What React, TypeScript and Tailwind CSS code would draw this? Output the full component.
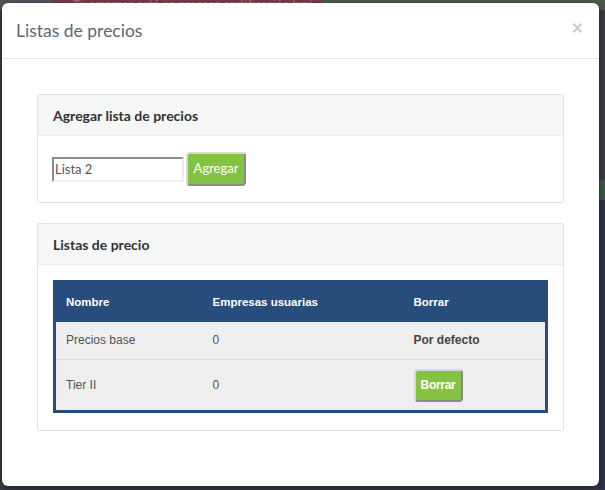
import React from "react";

const rows = [
  { name: "Precios base", count: 0, isDefault: true },
  { name: "Tier II", count: 0, isDefault: false },
];

function GreenButton({ children, className = "" }: { children: React.ReactNode; className?: string }) {
  return (
    <button
      className={
        "bg-[#84c341] text-white rounded-[4px] border-2 border-t-[#d8d8d8] border-l-[#d8d8d8] border-r-[#8a8a8a] border-b-[#8a8a8a] " +
        className
      }
    >
      {children}
    </button>
  );
}

export default function App() {
  return (
    <div className="relative w-[605px] h-[490px] overflow-hidden bg-[#3b3e48] font-['Lato',sans-serif]">
      {/* Backdrop: page behind the overlay */}
      <div className="flex h-[10px] w-full">
        <div className="w-[53px] bg-[#52565c]" />
        <div className="w-[268px] bg-[#7a3a48] text-[#a46c78] text-[12px] leading-[8px] overflow-hidden pl-[20px] font-bold whitespace-nowrap">
          Tu empresa está en proceso certificación bmi
        </div>
        <div className="flex-1 bg-[#4b5a4c]" />
      </div>
      <div className="absolute right-0 top-[180px] w-[8px] h-[20px] bg-[#3e5a4a]" />
      <div className="absolute right-0 top-[200px] w-[8px] h-[290px] bg-[#30344c]" />

      {/* Modal */}
      <div className="absolute left-[2px] top-[3px] w-[597px] h-[483px] bg-white rounded-[6px] shadow-[0_3px_9px_rgba(0,0,0,0.5)] overflow-hidden">
        <div className="flex items-center justify-between h-[56px] border-b border-[#e5e5e5] pl-[14px] pr-[16px]">
          <h4 className="text-[17.5px] text-[#5a6874] pt-[1px]">Listas de precios</h4>
          <span className="text-[#cccccc] text-[20px] font-bold leading-none -mt-[8px]">×</span>
        </div>

        <div className="px-[35px] pt-[35px]">
          {/* Panel 1 */}
          <div className="border border-[#dde4e4] rounded-[2px]">
            <div className="h-[41px] bg-[#f5f7f6] border-b border-[#e8eded] flex items-center px-[15px]">
              <span className="text-[14px] font-bold text-[#333]">Agregar lista de precios</span>
            </div>
            <div className="flex items-center px-[14px] pt-[16px] pb-[16px]">
              <input
                defaultValue="Lista 2"
                className="w-[132px] h-[25px] text-[13px] text-[#555] px-[1px] border-2 border-t-[#8c8c8c] border-l-[#8c8c8c] border-r-[#eeeeee] border-b-[#eeeeee] outline-none"
              />
              <GreenButton className="ml-[2px] h-[34px] w-[60px] text-[13px]">Agregar</GreenButton>
            </div>
          </div>

          {/* Panel 2 */}
          <div className="mt-[20px] border border-[#dde4e4] rounded-[2px]">
            <div className="h-[41px] bg-[#f5f7f6] border-b border-[#e8eded] flex items-center px-[15px]">
              <span className="text-[14px] font-bold text-[#333]">Listas de precio</span>
            </div>
            <div className="px-[15px] pt-[15px] pb-[17px]">
              <table className="w-full table-fixed border-[3px] border-[#284d7d] font-['Liberation_Sans',Arial,sans-serif] text-[12px] border-collapse">
                <thead>
                  <tr className="bg-[#284d7d] text-white h-[40px] text-[11.5px]">
                    <th className="text-left font-bold pl-[10px] w-[158px]">Nombre</th>
                    <th className="text-left font-bold w-[201px]">Empresas usuarias</th>
                    <th className="text-left font-bold">Borrar</th>
                  </tr>
                </thead>
                <tbody className="text-[#555] bg-[#eeeeee]">
                  {rows.map((r) => (
                    <tr key={r.name} className={r.isDefault ? "h-[38px] border-b border-[#dcdcdc]" : "h-[52px]"}>
                      <td className="pl-[10px] pb-[1px]">{r.name}</td>
                      <td className="pb-[1px]">{r.count}</td>
                      <td>
                        {r.isDefault ? (
                          <span className="font-bold text-[#444]">Por defecto</span>
                        ) : (
                          <GreenButton className="h-[33px] w-[49px] text-[12px] font-bold tracking-[-0.3px]">Borrar</GreenButton>
                        )}
                      </td>
                    </tr>
                  ))}
                </tbody>
              </table>
            </div>
          </div>
        </div>
      </div>
    </div>
  );
}
